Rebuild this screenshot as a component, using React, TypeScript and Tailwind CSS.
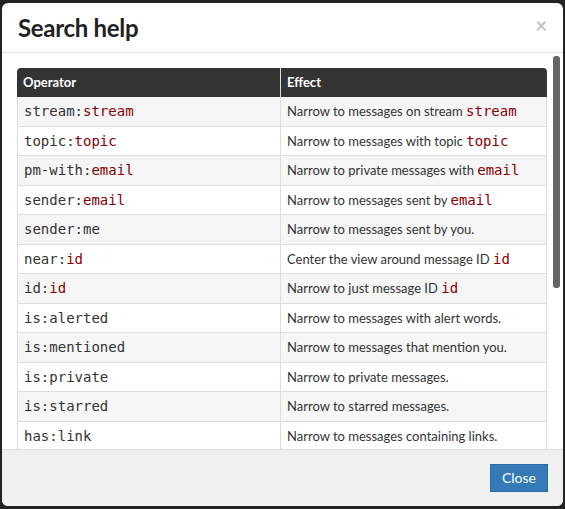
import React from 'react';

type Row = { op: string; arg?: string; effect: string; code?: string };

const rows: Row[] = [
  { op: 'stream:', arg: 'stream', effect: 'Narrow to messages on stream ', code: 'stream' },
  { op: 'topic:', arg: 'topic', effect: 'Narrow to messages with topic ', code: 'topic' },
  { op: 'pm-with:', arg: 'email', effect: 'Narrow to private messages with ', code: 'email' },
  { op: 'sender:', arg: 'email', effect: 'Narrow to messages sent by ', code: 'email' },
  { op: 'sender:me', effect: 'Narrow to messages sent by you.' },
  { op: 'near:', arg: 'id', effect: 'Center the view around message ID ', code: 'id' },
  { op: 'id:', arg: 'id', effect: 'Narrow to just message ID ', code: 'id' },
  { op: 'is:alerted', effect: 'Narrow to messages with alert words.' },
  { op: 'is:mentioned', effect: 'Narrow to messages that mention you.' },
  { op: 'is:private', effect: 'Narrow to private messages.' },
  { op: 'is:starred', effect: 'Narrow to starred messages.' },
  { op: 'has:link', effect: 'Narrow to messages containing links.' },
];

const mono = "font-['DejaVu_Sans_Mono','Liberation_Mono',monospace]";

const App: React.FC = () => {
  return (
    <div className="w-[565px] h-[509px] bg-[#222] pt-[3px] pl-[2px] font-['Lato','Noto_Sans',sans-serif] text-[#333]">
      <div className="w-[561px] h-[503px] bg-white rounded-md flex flex-col overflow-hidden">
        {/* header */}
        <div className="h-[50px] shrink-0 border-b border-[#e5e5e5] flex items-center justify-between pl-[16px] pr-[16px]">
          <h1 className="text-[24px] font-bold text-[#222] leading-none tracking-[-0.3px]">Search help</h1>
          <span className="text-[20px] font-bold text-[#c4c4c4] leading-none -mt-[6px]">×</span>
        </div>

        {/* body */}
        <div className="relative flex-1 overflow-hidden pt-[15px] pl-[15px]">
          <table className="w-[530px] table-fixed border-separate border-spacing-0 text-[13px] whitespace-nowrap">
            <thead>
              <tr className="bg-[#333] text-white">
                <th className="h-[29px] w-[264px] text-left font-bold pl-[6px] rounded-tl-[4px] border-r border-[#ddd]">
                  Operator
                </th>
                <th className="text-left font-bold pl-[6px] rounded-tr-[4px]">Effect</th>
              </tr>
            </thead>
            <tbody>
              {rows.map((r, i) => (
                <tr key={r.op} className={i % 2 === 0 ? 'bg-[#f6f6f6]' : 'bg-white'}>
                  <td className={`${mono} text-[14px] h-[29.5px] pl-[6px] border-l border-b border-r border-[#ddd] leading-[20px]`}>
                    {r.op}
                    {r.arg && <span className="text-[#880000]">{r.arg}</span>}
                  </td>
                  <td className="pl-[6px] border-b border-r border-[#ddd] leading-[20px] overflow-hidden">
                    {r.effect}
                    {r.code && <span className={`${mono} text-[14px] text-[#880000]`}>{r.code}</span>}
                  </td>
                </tr>
              ))}
            </tbody>
          </table>
          {/* scrollbar thumb */}
          <div className="absolute top-[3px] right-[3px] w-[7px] h-[232px] bg-[#666] rounded-[3px]" />
        </div>

        {/* footer */}
        <div className="h-[57px] shrink-0 bg-[#f0f0f0] border-t border-[#ddd] flex items-center justify-end pr-[15px]">
          <button className="w-[58px] h-[28px] bg-[#337ab7] border border-[#2e6da4] text-white text-[14px] leading-none">
            Close
          </button>
        </div>
      </div>
    </div>
  );
};

export default App;
